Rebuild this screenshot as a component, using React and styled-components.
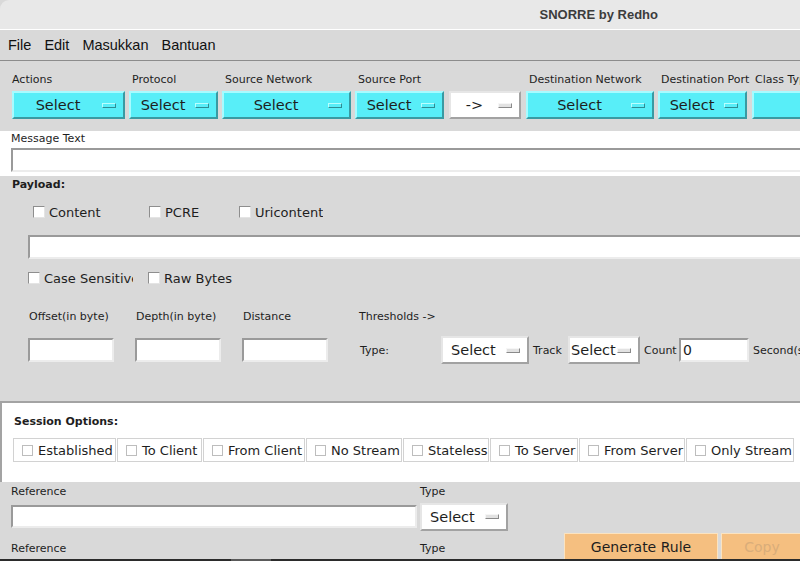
import React from "react";
import styled, { createGlobalStyle } from "styled-components";

const GlobalStyle = createGlobalStyle`
  html, body {
    margin: 0;
    padding: 0;
    overflow: hidden;
    background: #2b2b2b;
  }
  * { box-sizing: border-box; }
`;

const Window = styled.div`
  width: 800px;
  height: 561px;
  overflow: hidden;
  display: flex;
  flex-direction: column;
  background: #d9d9d9;
  font-family: "DejaVu Sans", sans-serif;
  color: #1e1e1e;
`;

const TitleBar = styled.div`
  height: 30px;
  flex: none;
  background: #e8e8e8;
  border-top-left-radius: 9px;
  border-bottom: 1px solid #ffffff;
  display: flex;
  align-items: center;
  justify-content: flex-end;
  padding-right: 142px;
  font-family: "Liberation Sans", sans-serif;
  font-weight: bold;
  font-size: 13px;
  color: #3c3c3c;
`;

const MenuBar = styled.div`
  height: 31px;
  flex: none;
  display: flex;
  align-items: center;
  gap: 13px;
  padding: 0 0 0 8px;
  border-bottom: 1px solid #8c8c8c;
  font-family: "Liberation Sans", sans-serif;
  font-size: 14.5px;
  color: #111;
`;

const Toolbar = styled.div`
  height: 70px;
  flex: none;
  display: flex;
  gap: 4px;
  padding: 12px 0 0 12px;
`;

const Column = styled.div`
  width: ${({ $w }) => $w}px;
  flex: none;
  display: flex;
  flex-direction: column;
  gap: 4px;
  margin-left: ${({ $ml }) => $ml || 0}px;
`;

const Label = styled.div`
  height: 14px;
  line-height: 14px;
  font-size: 11px;
  white-space: nowrap;
  padding-left: ${({ $pl }) => $pl || 0}px;
`;

const BoldLabel = styled(Label)`
  font-weight: bold;
`;

const Dropdown = styled.div`
  height: 28px;
  width: ${({ $w }) => ($w ? `${$w}px` : "100%")};
  flex: none;
  display: flex;
  align-items: center;
  background: ${({ $white }) => ($white ? "#ffffff" : "#58eef8")};
  border: 2px solid;
  border-color: ${({ $white }) =>
    $white ? "#e6e6e6 #a2a2a2 #a2a2a2 #e6e6e6" : "#a8fbff #3a9aa2 #3a9aa2 #a8fbff"};
  font-size: 14.5px;
  padding-right: 7px;
  padding-left: ${({ $pl }) => $pl || 0}px;
`;

const DropText = styled.span`
  flex: 1;
  text-align: ${({ $left }) => ($left ? "left" : "center")};
`;

const Indicator = styled.span`
  width: 14px;
  height: 5px;
  flex: none;
  border: 1px solid;
  border-color: ${({ $white }) =>
    $white ? "#f6f6f6 #8a8a8a #8a8a8a #f6f6f6" : "#b8ffff #2f8c93 #2f8c93 #b8ffff"};
  background: ${({ $white }) => ($white ? "#e2e2e2" : "#58eef8")};
`;

const MessageSection = styled.div`
  height: 45px;
  flex: none;
  background: #ffffff;
  display: flex;
  flex-direction: column;
  gap: 2px;
  padding: 1px 0 0 11px;
`;

const Entry = styled.div`
  height: ${({ $h }) => $h || 24}px;
  width: ${({ $w }) => ($w ? `${$w}px` : "auto")};
  flex: ${({ $w }) => ($w ? "none" : "1")};
  background: #ffffff;
  border: 2px solid;
  border-color: #9a9a9a #ececec #ececec #9a9a9a;
  font-size: 14px;
  line-height: 20px;
  padding-left: 2px;
  margin-left: ${({ $ml }) => $ml || 0}px;
`;

const WideEntry = styled(Entry)`
  flex: none;
  margin-right: -20px;
`;

const PayloadSection = styled.div`
  height: 225px;
  flex: none;
  display: flex;
  flex-direction: column;
  padding: 2px 0 0 12px;
`;

const Row = styled.div`
  display: flex;
  align-items: center;
  height: ${({ $h }) => $h}px;
  margin-top: ${({ $mt }) => $mt || 0}px;
  padding-left: ${({ $pl }) => $pl || 0}px;
  flex: none;
`;

const CheckItem = styled.label`
  width: ${({ $w }) => ($w ? `${$w}px` : "auto")};
  margin-right: ${({ $mr }) => $mr || 0}px;
  flex: none;
  display: flex;
  align-items: center;
  gap: 4px;
  font-size: 13px;
  white-space: nowrap;
  overflow: hidden;
`;

const Box = styled.span`
  width: 12px;
  height: 12px;
  flex: none;
  background: #ffffff;
  border: 1px solid;
  border-color: #8e8e8e #e4e4e4 #e4e4e4 #8e8e8e;
`;

const Field = styled.div`
  width: ${({ $w }) => $w}px;
  flex: none;
  font-size: 11px;
  white-space: nowrap;
  padding-left: ${({ $pl }) => $pl || 0}px;
`;

const InlineLabel = styled.span`
  width: ${({ $w }) => $w}px;
  flex: none;
  font-size: 11px;
  padding-left: 4px;
  white-space: nowrap;
`;

const SessionSection = styled.div`
  height: 81px;
  flex: none;
  background: #ffffff;
  border-top: 2px solid #a3a3a3;
  border-left: 2px solid #a3a3a3;
  display: flex;
  flex-direction: column;
  padding: 12px 0 0 12px;
`;

const SessionGroup = styled.div`
  display: flex;
  gap: 1px;
  margin-top: 9px;
  height: 24px;
  margin-left: -1px;
`;

const SessionCell = styled.div`
  width: ${({ $w }) => $w}px;
  flex: none;
  height: 24px;
  border: 1px solid #d2d2d2;
  display: flex;
  align-items: center;
  gap: 5px;
  padding-left: 8px;
  font-size: 13px;
  white-space: nowrap;
  overflow: hidden;
`;

const LightBox = styled.span`
  width: 11px;
  height: 11px;
  flex: none;
  border: 1px solid #bdbdbd;
  background: #ffffff;
`;

const ReferenceSection = styled.div`
  flex: 1;
  display: flex;
  flex-direction: column;
  padding: 3px 0 0 11px;
`;

const RefGrid = styled.div`
  display: grid;
  grid-template-columns: 409px 144px 1fr;
  grid-template-rows: 16px 31px 27px;
`;

const RefCell = styled.div`
  display: flex;
  align-items: ${({ $end }) => ($end ? "flex-end" : "center")};
  gap: 3px;
`;

const ActionButton = styled.div`
  width: ${({ $w }) => $w}px;
  height: 26px;
  flex: none;
  background: #f5bf80;
  border: 1px solid #fbe3c0;
  border-bottom: none;
  display: flex;
  align-items: center;
  justify-content: center;
  font-size: 14px;
  color: ${({ $muted }) => ($muted ? "#d9ad7a" : "#1e1e1e")};
`;

const BottomStrip = styled.div`
  height: 3px;
  flex: none;
  background: #2b2b2b;
  display: flex;
  padding-left: 231px;
`;

const StripHandle = styled.span`
  width: 40px;
  background: #5a5a5a;
`;

const Select = ({ w, white, text = "Select", left, pl }) => (
  <Dropdown $w={w} $white={white} $pl={pl}>
    <DropText $left={left}>{text}</DropText>
    <Indicator $white={white} />
  </Dropdown>
);

const toolbarCols = [
  { label: "Actions", w: 113, pl: 0 },
  { label: "Protocol", w: 89 },
  { label: "Source Network", w: 129 },
  { label: "Source Port", w: 89 },
  { label: "", w: 72, white: true, text: "->", ml: 1 },
  { label: "Destination Network", w: 128, ml: 1 },
  { label: "Destination Port", w: 89 },
  { label: "Class Type", w: 120, text: "", ml: 1 },
];

const sessionOptions = [
  ["Established", 103],
  ["To Client", 85],
  ["From Client", 102],
  ["No Stream", 96],
  ["Stateless", 86],
  ["To Server", 88],
  ["From Server", 106],
  ["Only Stream", 108],
];

export default function App() {
  return (
    <Window>
      <GlobalStyle />
      <TitleBar>SNORRE by Redho</TitleBar>
      <MenuBar>
        <span>File</span>
        <span>Edit</span>
        <span>Masukkan</span>
        <span>Bantuan</span>
      </MenuBar>

      <Toolbar>
        {toolbarCols.map((c, i) => (
          <Column key={i} $w={c.w} $ml={c.ml}>
            <Label $pl={c.pl ?? 3}>{c.label}</Label>
            <Select white={c.white} text={c.text ?? "Select"} />
          </Column>
        ))}
      </Toolbar>

      <MessageSection>
        <Label>Message Text</Label>
        <WideEntry $w={800} />
      </MessageSection>

      <PayloadSection>
        <BoldLabel>Payload:</BoldLabel>
        <Row $h={18} $mt={11} $pl={21}>
          <CheckItem $w={116}><Box />Content</CheckItem>
          <CheckItem $w={90}><Box />PCRE</CheckItem>
          <CheckItem><Box />Uricontent</CheckItem>
        </Row>
        <Row $h={24} $mt={14} $pl={16}>
          <WideEntry $w={790} />
        </Row>
        <Row $h={18} $mt={10} $pl={16}>
          <CheckItem $w={105} $mr={15}><Box />Case Sensitive</CheckItem>
          <CheckItem><Box />Raw Bytes</CheckItem>
        </Row>
        <Row $h={14} $mt={22} $pl={17}>
          <Field $w={107}>Offset(in byte)</Field>
          <Field $w={107}>Depth(in byte)</Field>
          <Field $w={116}>Distance</Field>
          <Field $w={100}>Thresholds -&gt;</Field>
        </Row>
        <Row $h={28} $mt={13} $pl={16}>
          <Entry $w={86} />
          <Entry $w={86} $ml={21} />
          <Entry $w={86} $ml={21} />
          <Field $w={113} $pl={32}>Type:</Field>
          <Select w={88} white pl={8} left />
          <InlineLabel $w={39}>Track</InlineLabel>
          <Select w={72} white pl={1} left />
          <InlineLabel $w={39}>Count</InlineLabel>
          <Entry $w={70}>0</Entry>
          <InlineLabel $w={80}>Second(s)</InlineLabel>
        </Row>
      </PayloadSection>

      <SessionSection>
        <BoldLabel>Session Options:</BoldLabel>
        <SessionGroup>
          {sessionOptions.map(([name, w]) => (
            <SessionCell key={name} $w={w}>
              <LightBox />
              {name}
            </SessionCell>
          ))}
        </SessionGroup>
      </SessionSection>

      <ReferenceSection>
        <RefGrid>
          <Label>Reference</Label>
          <Label>Type</Label>
          <span />
          <RefCell>
            <Entry $w={406} $h={23} />
          </RefCell>
          <RefCell>
            <Select w={88} white pl={8} left />
          </RefCell>
          <span />
          <RefCell $end>
            <Label style={{ marginBottom: 3 }}>Reference</Label>
          </RefCell>
          <RefCell $end>
            <Label style={{ marginBottom: 3 }}>Type</Label>
          </RefCell>
          <RefCell $end>
            <ActionButton $w={154}>Generate Rule</ActionButton>
            <ActionButton $w={82} $muted>Copy</ActionButton>
          </RefCell>
        </RefGrid>
      </ReferenceSection>

      <BottomStrip>
        <StripHandle />
      </BottomStrip>
    </Window>
  );
}
